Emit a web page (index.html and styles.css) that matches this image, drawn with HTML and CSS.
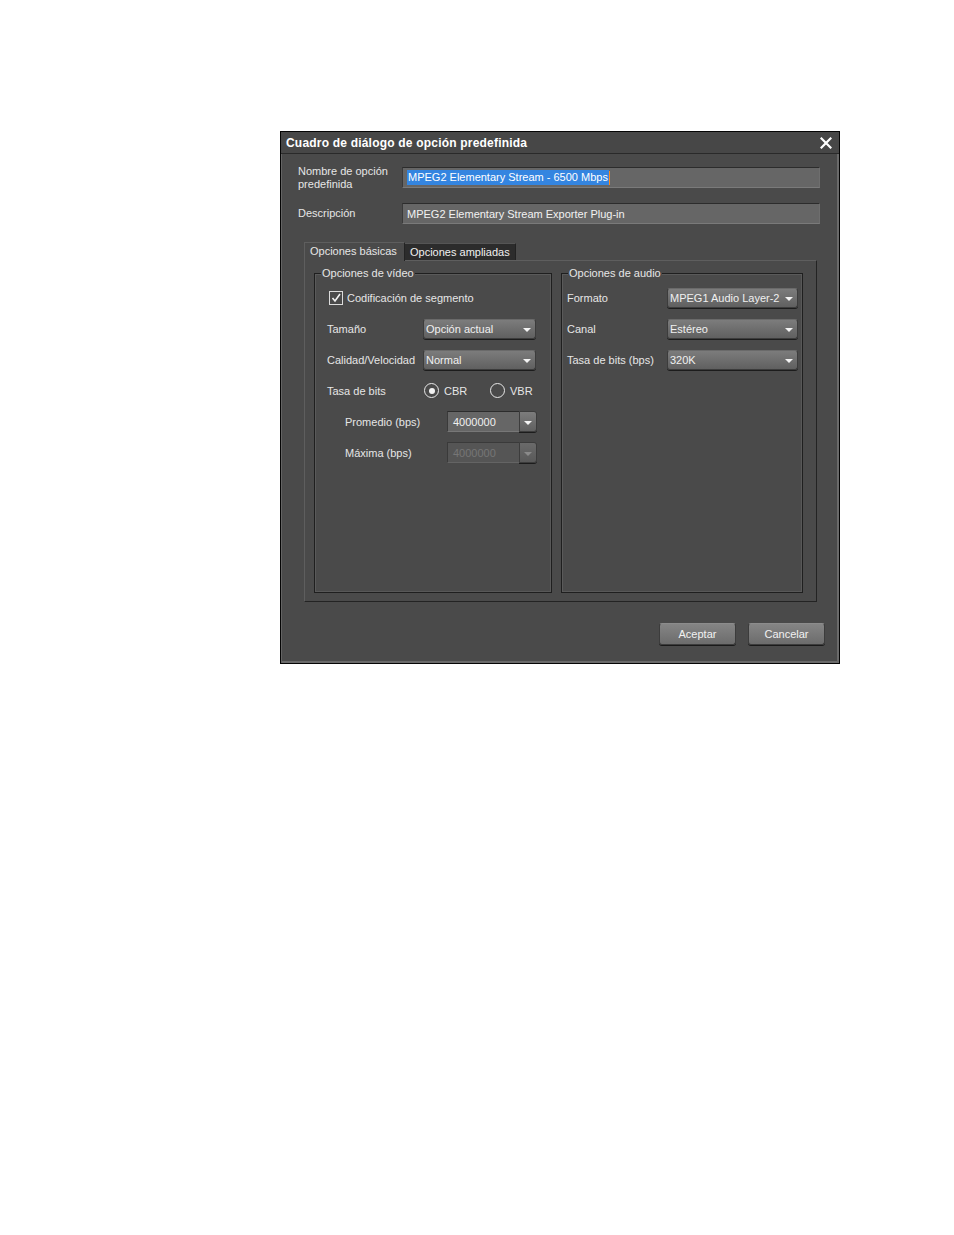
FILE: index.html
```html
<!DOCTYPE html>
<html lang="es">
<head>
<meta charset="utf-8">
<title>Cuadro de diálogo de opción predefinida</title>
<link rel="stylesheet" href="styles.css">
</head>
<body>
<div class="page">
  <div class="dialog">
    <div class="titlebar">
      <span class="title">Cuadro de diálogo de opción predefinida</span>
      <svg class="close" width="12" height="12" viewBox="0 0 12 12"><path d="M1.5 1.5 L10.5 10.5 M10.5 1.5 L1.5 10.5" stroke="#fff" stroke-width="2.2" stroke-linecap="square"/></svg>
    </div>
    <div class="content">
      <div class="frow">
        <div class="flabel">Nombre de opción<br>predefinida</div>
        <div class="field"><span class="sel">MPEG2 Elementary Stream - 6500 Mbps</span><span class="caret"></span></div>
      </div>
      <div class="frow gap">
        <div class="flabel">Descripción</div>
        <div class="field">MPEG2 Elementary Stream Exporter Plug-in</div>
      </div>
      <div class="tabs">
        <div class="tab active">Opciones básicas</div>
        <div class="tab">Opciones ampliadas</div>
      </div>
      <div class="panel">
        <div class="group video">
          <span class="legend">Opciones de vídeo</span>
          <div class="row">
            <span class="check"><svg width="12" height="12" viewBox="0 0 12 12"><path d="M2.5 6 L5 9 L10 2" fill="none" stroke="#f2f2f2" stroke-width="1.6"/></svg></span>
            <span class="lbl-check">Codificación de segmento</span>
          </div>
          <div class="row">
            <span class="lbl">Tamaño</span>
            <div class="combo w-v"><span>Opción actual</span><i class="arrow"></i></div>
          </div>
          <div class="row">
            <span class="lbl">Calidad/Velocidad</span>
            <div class="combo w-v"><span>Normal</span><i class="arrow"></i></div>
          </div>
          <div class="row">
            <span class="lbl">Tasa de bits</span>
            <span class="radio-item first"><span class="radio on"></span>CBR</span>
            <span class="radio-item"><span class="radio"></span>VBR</span>
          </div>
          <div class="row sub">
            <span class="lbl">Promedio (bps)</span>
            <div class="spin"><span class="spin-text">4000000</span><span class="spin-btn"><i class="arrow"></i></span></div>
          </div>
          <div class="row sub">
            <span class="lbl">Máxima (bps)</span>
            <div class="spin disabled"><span class="spin-text">4000000</span><span class="spin-btn"><i class="arrow"></i></span></div>
          </div>
        </div>
        <div class="group audio">
          <span class="legend">Opciones de audio</span>
          <div class="row">
            <span class="lbl">Formato</span>
            <div class="combo w-a"><span>MPEG1 Audio Layer-2</span><i class="arrow"></i></div>
          </div>
          <div class="row">
            <span class="lbl">Canal</span>
            <div class="combo w-a"><span>Estéreo</span><i class="arrow"></i></div>
          </div>
          <div class="row">
            <span class="lbl">Tasa de bits (bps)</span>
            <div class="combo w-a"><span>320K</span><i class="arrow"></i></div>
          </div>
        </div>
      </div>
    </div>
    <div class="buttons">
      <div class="btn">Aceptar</div>
      <div class="btn">Cancelar</div>
    </div>
  </div>
</div>
</body>
</html>
```

FILE: styles.css
```css
html, body {
  margin: 0;
  padding: 0;
  background: #ffffff;
}

.page {
  padding: 131px 0 0 280px;
  font-family: "Liberation Sans", Arial, sans-serif;
  font-size: 11px;
  color: #e6e6e6;
}

.dialog {
  width: 560px;
  box-sizing: border-box;
  border: 1px solid #050505;
  background: #4a4a4a;
  box-shadow: inset 1px 0 0 #636363, inset -2px -2px 0 #6a6a6a;
}

.titlebar {
  height: 21px;
  border-bottom: 1px solid #2a2a2a;
  display: flex;
  align-items: center;
  justify-content: space-between;
  padding: 0 7px 0 5px;
  background: #474747;
}

.title {
  font-weight: bold;
  font-size: 12px;
  letter-spacing: 0.2px;
  color: #ffffff;
}

.close {
  display: block;
}

.content {
  padding: 13px 19px 0 17px;
}

.frow {
  display: flex;
  align-items: center;
  height: 21px;
}

.frow.gap {
  margin-top: 15px;
}

.flabel {
  width: 104px;
  line-height: 13px;
  flex: none;
}

.field {
  flex: 1;
  height: 21px;
  box-sizing: border-box;
  background: #666666;
  border-top: 1px solid #2c2c2c;
  border-left: 1px solid #3a3a3a;
  border-bottom: 1px solid #7a7a7a;
  border-right: 1px solid #6e6e6e;
  color: #f2f2f2;
  display: flex;
  align-items: center;
  padding-left: 4px;
  white-space: nowrap;
}

.sel {
  background: #3485e0;
  color: #ffffff;
  padding: 1px;
  line-height: 13px;
}

.caret {
  display: inline-block;
  width: 1px;
  height: 14px;
  background: #ff8a1c;
}

.tabs {
  display: flex;
  margin: 18px 0 0 6px;
  height: 18px;
  align-items: flex-end;
}

.tab {
  box-sizing: border-box;
  padding: 0 5px;
  white-space: nowrap;
}

.tab.active {
  width: 101px;
  height: 19px;
  line-height: 17px;
  background: #4a4a4a;
  border-top: 1px solid #5e5e5e;
  border-left: 1px solid #5e5e5e;
  border-right: 1px solid #232323;
  margin-bottom: -1px;
  position: relative;
  z-index: 1;
}

.tab:not(.active) {
  width: 111px;
  height: 17px;
  line-height: 16px;
  background: #2c2c2c;
  color: #f0f0f0;
  border-top: 1px solid #555;
  border-right: 1px solid #222;
}

.panel {
  margin-left: 6px;
  width: 513px;
  box-sizing: border-box;
  height: 342px;
  border-top: 1px solid #5e5e5e;
  border-left: 1px solid #5e5e5e;
  border-right: 1px solid #232323;
  border-bottom: 1px solid #232323;
  padding: 12px 13px 8px 9px;
  display: flex;
  gap: 9px;
}

.group {
  position: relative;
  height: 320px;
  box-sizing: border-box;
  border: 1px solid #1f1f1f;
  box-shadow: inset 1px 1px 0 #5a5a5a, inset -1px -1px 0 #585858;
  padding-top: 13px;
  display: flex;
  flex-direction: column;
  gap: 10px;
}

.group.video {
  width: 238px;
  padding-left: 12px;
}

.group.audio {
  width: 242px;
  padding-left: 5px;
}

.legend {
  position: absolute;
  top: -8px;
  left: 6px;
  background: #4a4a4a;
  padding: 0 1px;
  line-height: 14px;
}

.row {
  display: flex;
  align-items: center;
  height: 21px;
}

.lbl {
  width: 96px;
  flex: none;
  white-space: nowrap;
}

.audio .lbl {
  width: 100px;
}

.row.sub {
  padding-left: 18px;
}

.row.sub .lbl {
  width: 102px;
}

.check {
  width: 14px;
  height: 14px;
  box-sizing: border-box;
  border: 1px solid #dcdcdc;
  margin-left: 2px;
  display: flex;
  align-items: center;
  justify-content: center;
}

.check svg {
  display: block;
}

.lbl-check {
  margin-left: 4px;
}

.combo {
  height: 20px;
  box-sizing: border-box;
  border-radius: 3px;
  background: linear-gradient(#7c7c7c, #606060);
  border: 1px solid #3c3c3c;
  border-top-color: #6a6a6a;
  box-shadow: 0 1px 0 #1c1c1c;
  display: flex;
  align-items: center;
  justify-content: space-between;
  padding: 0 4px 0 2px;
  color: #f0f0f0;
  white-space: nowrap;
}

.w-v {
  width: 113px;
}

.w-a {
  width: 131px;
}

.arrow {
  display: block;
  width: 0;
  height: 0;
  border-left: 4px solid transparent;
  border-right: 4px solid transparent;
  border-top: 4px solid #f4f4f4;
  margin-top: 2px;
}

.radio-item {
  display: flex;
  align-items: center;
  gap: 5px;
  margin-left: 1px;
}

.radio-item.first {
  width: 65px;
}

.radio {
  width: 15px;
  height: 15px;
  box-sizing: border-box;
  border: 1.5px solid #e8e8e8;
  border-radius: 50%;
  display: flex;
  align-items: center;
  justify-content: center;
}

.radio.on::after {
  content: "";
  width: 6px;
  height: 6px;
  border-radius: 50%;
  background: #f2f2f2;
}

.spin {
  display: flex;
  height: 21px;
}

.spin-text {
  width: 72px;
  box-sizing: border-box;
  background: #666666;
  border-top: 1px solid #2c2c2c;
  border-left: 1px solid #3a3a3a;
  border-bottom: 1px solid #777;
  padding-left: 5px;
  display: flex;
  align-items: center;
  color: #f0f0f0;
}

.spin-btn {
  width: 18px;
  box-sizing: border-box;
  border-radius: 0 3px 3px 0;
  background: linear-gradient(#7c7c7c, #606060);
  border: 1px solid #3c3c3c;
  box-shadow: 0 1px 0 #1c1c1c;
  display: flex;
  align-items: center;
  justify-content: center;
}

.spin.disabled .spin-text {
  background: #555555;
  color: #767676;
  border-top-color: #3a3a3a;
  border-bottom-color: #646464;
}

.spin.disabled .spin-btn {
  background: linear-gradient(#6a6a6a, #595959);
}

.spin.disabled .arrow {
  border-top-color: #8a8a8a;
}

.buttons {
  display: flex;
  justify-content: flex-end;
  gap: 12px;
  padding: 21px 14px 18px 0;
}

.btn {
  width: 77px;
  height: 22px;
  box-sizing: border-box;
  border-radius: 3px;
  background: linear-gradient(#858585, #6c6c6c);
  border: 1px solid #3c3c3c;
  border-top-color: #8c8c8c;
  box-shadow: 0 1px 0 #1a1a1a;
  display: flex;
  align-items: center;
  justify-content: center;
  color: #f2f2f2;
}
```
